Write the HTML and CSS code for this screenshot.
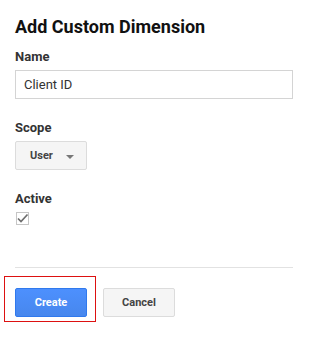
FILE: index.html
```html
<!DOCTYPE html>
<html lang="en">
<head>
    <meta charset="UTF-8">
    <meta name="viewport" content="width=device-width, initial-scale=1.0">
    <title>Add Custom Dimension</title>
    <link rel="stylesheet" href="styles.css">
</head>
<body>
    <div class="dialog">
        <h1 class="title">Add Custom Dimension</h1>

        <div class="field">
            <label class="field-label" for="dimName">Name</label>
            <input class="text-input" id="dimName" type="text" value="Client ID">
        </div>

        <div class="field">
            <div class="field-label">Scope</div>
            <div class="dropdown">
                <span>User</span>
                <span class="caret"></span>
            </div>
        </div>

        <div class="field">
            <div class="field-label">Active</div>
            <span class="checkbox">
                <svg width="13" height="13" viewBox="0 0 13 13">
                    <path d="M2 6.5 L5 9.5 L11.5 2.5" fill="none" stroke="#6e6e6e" stroke-width="1.7"/>
                </svg>
            </span>
        </div>

        <div class="divider"></div>

        <div class="actions">
            <button class="btn btn-primary">Create</button>
            <button class="btn">Cancel</button>
            <div class="highlight"></div>
        </div>
    </div>
</body>
</html>
```

FILE: styles.css
```css
* {
    box-sizing: border-box;
    margin: 0;
    padding: 0;
    font-family: Roboto, 'Liberation Sans', sans-serif;
}

body {
    background: #fff;
    min-height: 100vh;
}

.dialog {
    width: 293px;
    padding: 15px 0 30px 15px;
}

.title {
    font-size: 18px;
    line-height: 24px;
    font-weight: 700;
    color: #111;
}

/* Form fields */
.field {
    margin-top: 20px;
}

.title + .field {
    margin-top: 9px;
}

.field-label {
    display: block;
    font-size: 13px;
    line-height: 18px;
    font-weight: 700;
    color: #333;
    margin-bottom: 4px;
}

.text-input {
    display: block;
    width: 278px;
    height: 29px;
    border: 1px solid #d4d4d4;
    padding: 0 8px;
    font-size: 13px;
    color: #333;
    outline: none;
}

.dropdown {
    width: 72px;
    height: 29px;
    display: flex;
    align-items: center;
    padding-left: 14px;
    gap: 13px;
    background: #f5f5f5;
    border: 1px solid #dcdcdc;
    border-radius: 2px;
    font-size: 11px;
    font-weight: 700;
    color: #444;
}

.caret {
    width: 0;
    height: 0;
    border-left: 4px solid transparent;
    border-right: 4px solid transparent;
    border-top: 4px solid #777;
    margin-top: 2px;
}

.checkbox {
    display: block;
    width: 13px;
    height: 13px;
    margin: 4px 0 0 1px;
    border: 1px solid #c6c6c6;
    position: relative;
}

.checkbox svg {
    position: absolute;
    left: -1px;
    top: -1px;
}

.divider {
    width: 278px;
    height: 1px;
    background: #e2e2e2;
    margin-top: 42px;
}

/* Buttons */
.actions {
    display: flex;
    gap: 16px;
    margin-top: 20px;
    position: relative;
}

.btn {
    width: 72px;
    height: 29px;
    border: 1px solid #dcdcdc;
    border-radius: 2px;
    background: #f5f5f5;
    color: #444;
    font-size: 11px;
    font-weight: 700;
    cursor: pointer;
}

.btn-primary {
    background: linear-gradient(#4d90fe, #4787ed);
    border-color: #3079ed;
    color: #fff;
}

.highlight {
    position: absolute;
    display: block;
    left: -11px;
    top: -12px;
    width: 92px;
    height: 46px;
    border: 1px solid #dd1111;
    pointer-events: none;
}
```
